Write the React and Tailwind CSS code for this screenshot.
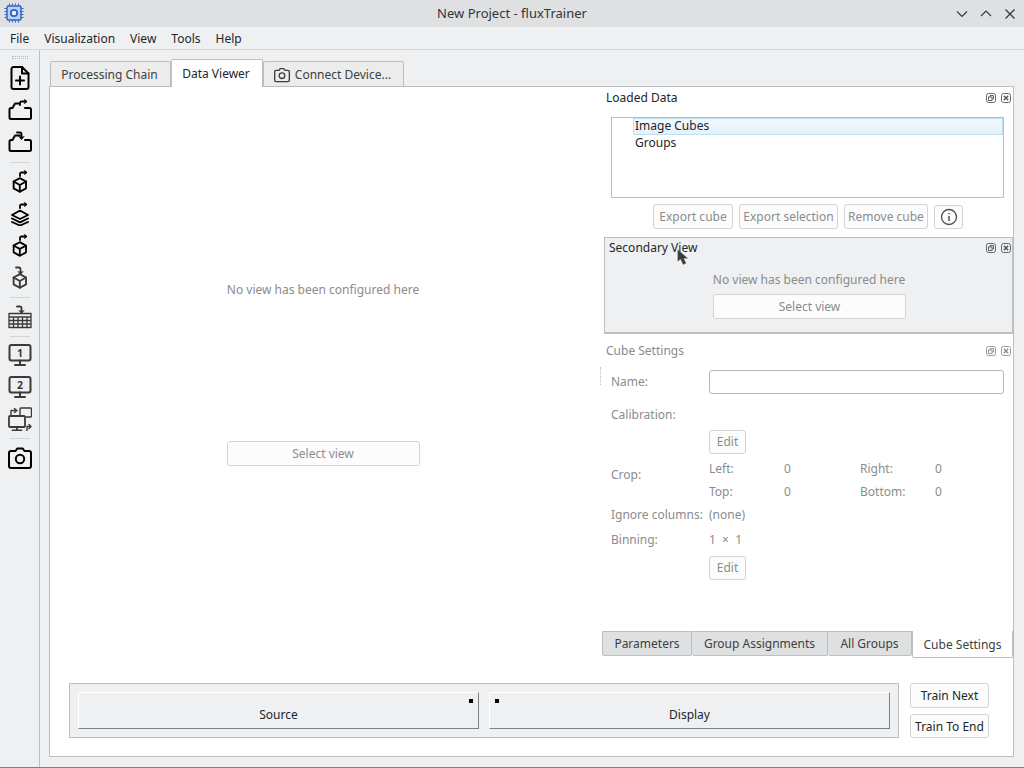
import React from 'react';

const Ic = ({ children, className = 'text-black' }) => (
  <svg width="24" height="24" viewBox="0 0 24 24" fill="none" stroke="currentColor" strokeWidth="2" strokeLinecap="round" strokeLinejoin="round" className={className}>
    {children}
  </svg>
);

const ArrowOut = ({ x = 12, y = 0 }) => (
  <g transform={`translate(${x} ${y})`} strokeWidth="1.8">
    <path d="M0 6V4a1.5 1.5 0 0 1 1.5-1.5H6" />
    <path d="M4.5 0.5 7 2.500 4.500 4.500" fill="currentColor" stroke="currentColor" strokeWidth="0.8" />
  </g>
);

const ArrowIn = ({ x = 8, y = 0 }) => (
  <g transform={`translate(${x} ${y})`} strokeWidth="1.8">
    <path d="M0 1.500h3A1.500 1.500 0 0 1 4.500 3v4" />
    <path d="M2 5.500 4.500 8.500 7 5.500" fill="currentColor" stroke="currentColor" strokeWidth="0.8" />
  </g>
);

const Cube = ({ y = 6 }) => (
  <g transform={`translate(5 ${y}) scale(0.62)`} strokeWidth="3">
    <path d="M11 1 21 6.500v11L11 23 1 17.500v-11z" />
    <path d="M1 6.500 11 12l10-5.500M11 12v11" />
  </g>
);

const NewFile = () => (
  <Ic>
    <path d="M5.500 1h8.500l6.500 6.500V21a2 2 0 0 1-2 2h-13a2 2 0 0 1-2-2V3a2 2 0 0 1 2-2z" />
    <path d="M14 1v6.500h6.500M12 10.500v8M8 14.500h8" />
  </Ic>
);

const folderPath = (gapEnd) =>
  `M12 5.500H7L4.500 10H3A1.500 1.500 0 0 0 1.500 11.500V19.500A1.500 1.500 0 0 0 3 21H21.500A1.500 1.500 0 0 0 23 19.500V11.500A1.500 1.500 0 0 0 21.500 10H${gapEnd}`;

const FolderOut = () => (
  <Ic>
    <path d={folderPath(17)} />
    <ArrowOut x={12} y={1} />
  </Ic>
);

const FolderIn = () => (
  <Ic>
    <path d={folderPath(17)} />
    <ArrowIn x={9} y={1} />
  </Ic>
);

const CubeOut = () => (
  <Ic><Cube y={7.5} /><ArrowOut x={12} y={0} /></Ic>
);

const LayersOut = () => (
  <Ic>
    <g strokeWidth="1.9">
      <path d="M12 8.500 20 13l-8 4-8-4z" />
      <path d="M4 16.500l8 3.800 8-3.800M4 20l8 3.500 8-3.500" />
    </g>
    <ArrowOut x={12} y={0} />
  </Ic>
);

const CubesOut = () => (
  <Ic>
    <g strokeDasharray="2.500 1.500" strokeWidth="2"><Cube y={7.5} /></g>
    <ArrowOut x={12} y={0} />
  </Ic>
);

const CubeIn = () => (
  <Ic className="text-[#3a3a3a]"><Cube y={7.5} /><ArrowIn x={8} y={0} /></Ic>
);

const TableIn = () => (
  <Ic className="text-[#3a3a3a]">
    <g strokeWidth="1.300">
      <path d="M1 8.500h22v14H1zM1 12h22M1 15.500h22M1 19h22M5.500 12v10.500M10 12v10.500M14.500 12v10.500M19 12v10.500" />
    </g>
    <ArrowIn x={9} y={0} />
  </Ic>
);

const Monitor = ({ n }) => (
  <svg width="24" height="24" viewBox="0 0 24 24" fill="none" stroke="currentColor" strokeWidth="2" strokeLinecap="round" strokeLinejoin="round" className="text-[#3a3a3a]">
    <rect x="1.500" y="2" width="21" height="15.500" rx="2" />
    <path d="M12 17.500v4M7 22h10" />
    <text x="12" y="13.500" textAnchor="middle" fontSize="10.500" fontWeight="700" fill="currentColor" stroke="none" fontFamily="Noto Sans, sans-serif">{n}</text>
  </svg>
);

const SwapMonitors = () => (
  <Ic className="text-[#3a3a3a]">
    <g strokeWidth="1.400">
      <path d="M12 8V2a1 1 0 0 1 1-1h9.500a1 1 0 0 1 1 1v7a1 1 0 0 1-1 1H18" />
      <rect x="1" y="9" width="16" height="11" rx="1" strokeWidth="1.800" />
      <path d="M9 20v3M4.500 23.500h9" strokeWidth="1.800" />
      <path d="M3 8V3.500h5M6.500 1.500 9 3.500 6.500 5.500" />
      <path d="M19 24v-4.500h3.500M21 17.500l2 2-2 2" />
    </g>
  </Ic>
);

const Camera = () => (
  <Ic>
    <path d="M7.500 5 9.200 2.500h5.600L16.500 5H21a2 2 0 0 1 2 2v13a2 2 0 0 1-2 2H3a2 2 0 0 1-2-2V7a2 2 0 0 1 2-2z" />
    <circle cx="12" cy="13" r="4.200" />
  </Ic>
);

const Sep = ({ h }) => (
  <div className={`flex w-full items-center justify-center ${h}`}>
    <div className="h-px w-[20px] bg-[#d3d5d6]" />
  </div>
);

const Tool = ({ children }) => <div className="flex h-8 w-full items-center justify-center">{children}</div>;

const Sidebar = () => (
  <div className="flex w-10 shrink-0 flex-col items-center border-r border-[#bcbebf]">
    <div className="mt-[6px] h-[3px] w-[16px] border-y border-dotted border-[#b9bbbc]" />
    <div className="h-[3px]" />
    <Tool><NewFile /></Tool>
    <Tool><FolderOut /></Tool>
    <Tool><FolderIn /></Tool>
    <Sep h="h-2" />
    <Tool><CubeOut /></Tool>
    <Tool><LayersOut /></Tool>
    <Tool><CubesOut /></Tool>
    <Tool><CubeIn /></Tool>
    <Sep h="h-[7px]" />
    <Tool><TableIn /></Tool>
    <Sep h="h-[6px]" />
    <Tool><Monitor n="1" /></Tool>
    <Tool><Monitor n="2" /></Tool>
    <Tool><SwapMonitors /></Tool>
    <Sep h="h-[7px]" />
    <Tool><Camera /></Tool>
  </div>
);

const DockBtns = ({ light }) => {
  const c = light ? 'text-[#8d8f91]' : 'text-[#55585a]';
  return (
    <div className={`flex gap-[5px] ${c}`}>
      <svg width="10" height="10" viewBox="0 0 10 10" fill="none" stroke="currentColor" strokeWidth="0.900">
        <rect x="0.500" y="0.500" width="9" height="9" rx="2" />
        <path d="M4 4V2.500h3.500V6H6" />
        <rect x="2.500" y="4" width="3.500" height="3.500" />
      </svg>
      <svg width="10" height="10" viewBox="0 0 10 10" fill="none" stroke="currentColor" strokeWidth="0.900">
        <rect x="0.500" y="0.500" width="9" height="9" rx="2" />
        <path d="M2.800 2.800l4.400 4.400M7.200 2.800l-4.400 4.400" strokeWidth="1.500" />
      </svg>
    </div>
  );
};

const Btn = ({ children, className = '' }) => (
  <div className={`flex items-center justify-center rounded-[3px] border border-[#d2d3d4] bg-[#fcfcfc] text-[#8a8c8e] ${className}`}>
    {children}
  </div>
);

const TopTabs = () => (
  <div className="flex h-[27px] items-end pl-px text-[#3b3f42]">
    <div className="flex h-[25px] w-[121px] items-center justify-center rounded-t-[2px] border border-b-0 border-[#bcbebf] bg-[#ececed] pr-[2px] pt-px">Processing Chain</div>
    <div className="z-10 mb-[-1px] flex h-[28px] w-[92px] items-center justify-center rounded-t-[2px] border border-b-0 border-[#bcbebf] bg-white pr-[2px] text-[#232629]">Data Viewer</div>
    <div className="flex h-[25px] w-[141px] items-center justify-center gap-[5px] rounded-t-[2px] border border-b-0 border-[#bcbebf] bg-[#ececed] pr-[2px] pt-px">
      <svg width="16" height="16" viewBox="0 0 24 24" fill="none" stroke="currentColor" strokeWidth="2" strokeLinejoin="round">
        <path d="M7.500 5 9.200 2.500h5.600L16.500 5H21a2 2 0 0 1 2 2v13a2 2 0 0 1-2 2H3a2 2 0 0 1-2-2V7a2 2 0 0 1 2-2z" />
        <circle cx="12" cy="13" r="4.200" />
      </svg>
      Connect Device...
    </div>
  </div>
);

const LoadedData = () => (
  <div className="h-[150px] shrink-0">
    <div className="flex h-[21px] items-center justify-between pl-[2px] pr-[2px] text-[#232629]">
      <span>Loaded Data</span>
      <DockBtns />
    </div>
    <div className="ml-[7px] mr-[9px] mt-[9px] h-[81px] border border-[#bcbebf] bg-white pl-[21px] text-[#232629]">
      <div className="flex h-[17px] items-center border border-[#bfe0f1] bg-[linear-gradient(#f3f9fd,#e4f2fa)] pb-px pl-px">Image Cubes</div>
      <div className="flex h-[17px] items-center pb-[2px] pl-[2px]">Groups</div>
    </div>
    <div className="mt-[6px] flex items-center pl-[49px] text-[#8a8c8e]">
      <Btn className="h-[25px] w-[80px]">Export cube</Btn>
      <Btn className="ml-[6px] h-[25px] w-[99px]">Export selection</Btn>
      <Btn className="ml-[6px] h-[25px] w-[84px]">Remove cube</Btn>
      <Btn className="ml-[6px] h-[24px] w-[29px]">
        <svg width="18" height="18" viewBox="0 0 18 18" fill="none" stroke="#4b4f52" strokeWidth="1.300">
          <circle cx="9" cy="9" r="7.500" />
          <path d="M9 8v5M9 5v1.300" strokeWidth="1.500" />
        </svg>
      </Btn>
    </div>
  </div>
);

const SecondaryView = () => (
  <div className="relative -mr-px h-[97px] shrink-0 border border-r-2 border-b-2 border-[#bcbebf] bg-[#eff0f1]">
    <div className="flex h-[19px] items-center justify-between pl-[4px] pr-[1px] text-[#232629]">
      <span>Secondary View</span>
      <DockBtns />
    </div>
    <div className="mt-[17px] pl-[1px] text-center text-[#8a8c8e]">No view has been configured here</div>
    <Btn className="ml-[108px] mt-[8px] h-[25px] w-[193px]">Select view</Btn>
    <svg width="13" height="19" viewBox="0 0 16 21" className="absolute left-[72px] top-[10px]">
      <path d="M1 1v14l3.500-2.800L7.500 19l3.500-1.500-3-6H13z" fill="#3a3a3a" stroke="#6a6a6a" strokeWidth="0.500" />
    </svg>
  </div>
);

const Row = ({ label, h, className = '', children }) => (
  <div className={`flex items-center ${h} ${className}`}>
    <div className="w-[98px] shrink-0">{label}</div>
    {children}
  </div>
);

const Pair = ({ a, b, c, d }) => (
  <div className="flex h-[23px] items-center">
    <span className="w-[75px]">{a}</span>
    <span className="w-[76px]">{b}</span>
    <span className="w-[75px]">{c}</span>
    <span>{d}</span>
  </div>
);

const CubeSettings = () => (
  <div className="relative flex-1 text-[#8a8c8e]">
    <div className="absolute -left-1 top-[33px] h-[18px] border-l border-dotted border-[#bcbebf]" />
    <div className="box-content flex h-[17px] items-center justify-between pl-[2px] pr-[2px] pt-2">
      <span>Cube Settings</span>
      <DockBtns light />
    </div>
    <div className="pl-[7px] pr-[9px] pt-[11px]">
      <Row label="Name:" h="h-[24px]">
        <div className="h-[24px] flex-1 rounded-[3px] border border-[#b5b7b8] bg-white" />
      </Row>
      <Row label="Calibration:" h="h-[20px]" className="mt-[11px]" />
      <div className="mt-[5px] pl-[98px]">
        <Btn className="h-[24px] w-[37px]">Edit</Btn>
      </div>
      <div className="mt-[3px] flex items-center">
        <div className="mb-[11px] w-[98px] shrink-0">Crop:</div>
        <div>
          <Pair a="Left:" b="0" c="Right:" d="0" />
          <Pair a="Top:" b="0" c="Bottom:" d="0" />
        </div>
      </div>
      <Row label="Ignore columns:" h="h-[23px]"><span>(none)</span></Row>
      <Row label="Binning:" h="h-[24px]" className="mt-[2px]"><span>1 &nbsp;× &nbsp;1</span></Row>
      <div className="mt-[4px] pl-[98px]">
        <Btn className="h-[24px] w-[37px]">Edit</Btn>
      </div>
    </div>
  </div>
);

const DockTabs = () => (
  <div className="ml-[2px] flex h-[27px] items-start text-[#3b3f42]">
    <div className="flex h-[25px] w-[90px] items-center justify-center rounded-b-[2px] border border-[#bcbebf] bg-[#dfe0e1]">Parameters</div>
    <div className="flex h-[25px] w-[136px] items-center justify-center rounded-b-[2px] border border-l-0 border-[#bcbebf] bg-[#dfe0e1]">Group Assignments</div>
    <div className="flex h-[25px] w-[84px] items-center justify-center rounded-b-[2px] border border-l-0 border-[#bcbebf] bg-[#dfe0e1]">All Groups</div>
    <div className="flex h-[27px] w-[101px] items-center justify-center rounded-b-[2px] border border-t-0 border-[#bcbebf] bg-white pt-px">Cube Settings</div>
  </div>
);

const Slot = ({ label, dot }) => (
  <div className="relative flex h-[37px] w-[401px] items-end justify-center border border-t-white border-l-white border-r-[#7f8081] border-b-[#7f8081] pb-[7px] text-[#232629]">
    {label}
    <div className={`absolute top-[6px] h-[4px] w-[4px] bg-black ${dot}`} />
  </div>
);

const BottomBar = () => (
  <div className="flex pl-[19px]">
    <div className="flex h-[55px] w-[830px] items-center gap-[10px] border border-[#bcbebf] bg-[#eff0f1] pl-2">
      <Slot label="Source" dot="right-[5px]" />
      <Slot label="Display" dot="left-[5px]" />
    </div>
    <div className="ml-[11px] flex flex-col gap-[6px] text-[#232629]">
      <Btn className="h-[25px] w-[79px] !text-[#232629]">Train Next</Btn>
      <Btn className="h-[24px] w-[79px] pt-px !text-[#232629]">Train To End</Btn>
    </div>
  </div>
);

export default function App() {
  return (
    <div className="flex h-[768px] w-[1024px] flex-col overflow-hidden bg-[#eff0f1] text-[12px] leading-none text-[#232629] [font-family:'Noto_Sans',sans-serif]">
      <div className="relative flex h-[27px] shrink-0 items-center justify-center bg-[#dee0e2] text-[13px] text-[#31363b]">
        <svg width="20" height="20" viewBox="0 0 20 20" fill="none" className="absolute left-[4px] top-[3px]">
          <rect x="3" y="3" width="14" height="14" rx="1.500" fill="#bcd2f2" stroke="#2d62c8" strokeWidth="1.500" />
          <circle cx="10" cy="10" r="3.200" stroke="#2d62c8" strokeWidth="1.800" fill="#eaf1fb" />
          <path d="M5.500 0.500v2M8.500 0.500v2M11.500 0.500v2M14.500 0.500v2M5.500 17.500v2M8.500 17.500v2M11.500 17.500v2M14.500 17.500v2M0.500 5.500h2M0.500 8.500h2M0.500 11.500h2M0.500 14.500h2M17.500 5.500h2M17.500 8.500h2M17.500 11.500h2M17.500 14.500h2" stroke="#2d62c8" />
        </svg>
        <span>New Project - fluxTrainer</span>
        <div className="absolute right-[8px] top-[8px] flex gap-[12px] text-[#31363b]">
          <svg width="12" height="12" viewBox="0 0 12 12" fill="none" stroke="currentColor" strokeWidth="1.100"><path d="M1 3.500 6 8.500l5-5" /></svg>
          <svg width="12" height="12" viewBox="0 0 12 12" fill="none" stroke="currentColor" strokeWidth="1.100"><path d="M1 8 6 3l5 5" /></svg>
          <svg width="12" height="12" viewBox="0 0 12 12" fill="none" stroke="currentColor" strokeWidth="1.200"><path d="M1.500 1.500l9 9M10.500 1.500l-9 9" /></svg>
        </div>
      </div>
      <div className="flex h-[23px] shrink-0 items-center gap-[15px] border-b border-[#d5d7d8] pl-[10px] pt-px text-[#232629]">
        <span>File</span>
        <span>Visualization</span>
        <span>View</span>
        <span>Tools</span>
        <span>Help</span>
      </div>
      <div className="flex min-h-0 flex-1 border-b border-[#7f8081]">
        <Sidebar />
        <div className="flex min-w-0 flex-1 flex-col pl-[9px] pr-[10px] pt-[9px]">
          <TopTabs />
          <div className="flex h-[671px] flex-col border border-[#bcbebf] bg-white">
            <div className="flex h-[544px] shrink-0">
              <div className="flex w-[546px] shrink-0 flex-col items-center pt-[197px] text-[#8a8c8e]">
                <div>No view has been configured here</div>
                <Btn className="mt-[145px] h-[25px] w-[193px]">Select view</Btn>
              </div>
              <div className="flex min-w-0 flex-1 flex-col pl-[8px]">
                <LoadedData />
                <SecondaryView />
                <CubeSettings />
              </div>
            </div>
            <div className="flex justify-end"><div className="w-[413px]"><DockTabs /></div></div>
            <div className="mt-[25px]"><BottomBar /></div>
          </div>
        </div>
      </div>
    </div>
  );
}
